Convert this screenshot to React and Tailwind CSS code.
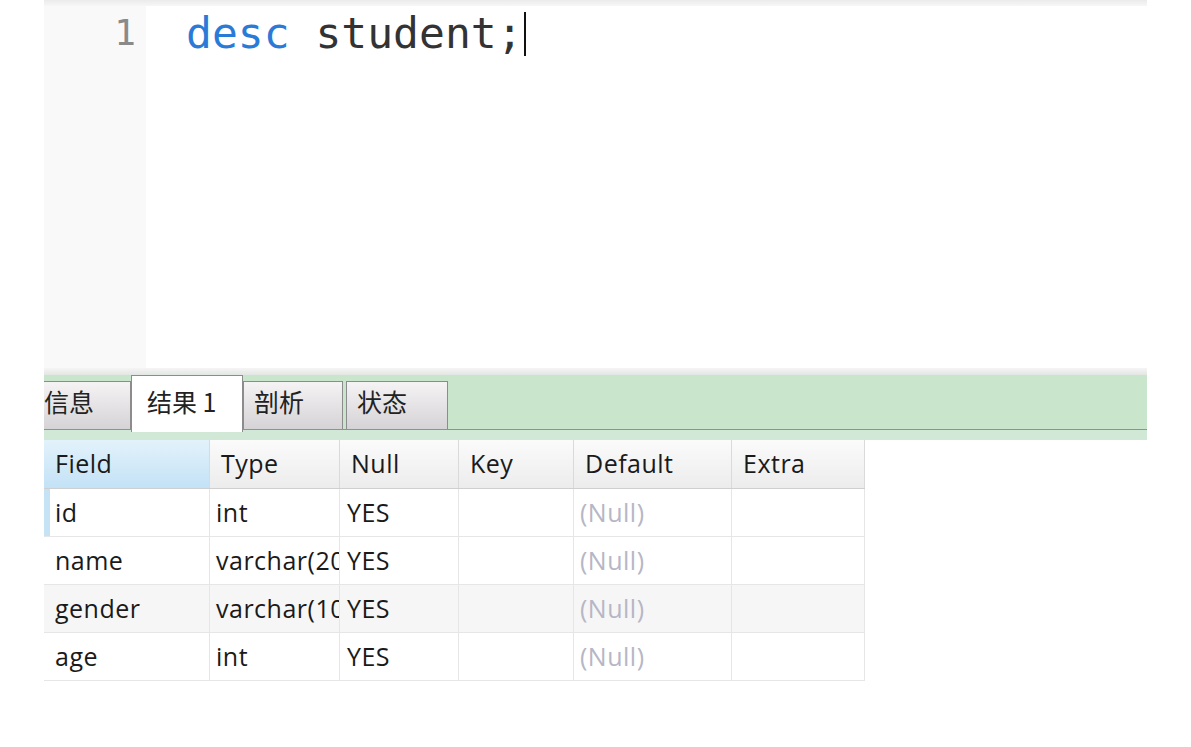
import React from 'react';

const columns = ['Field', 'Type', 'Null', 'Key', 'Default', 'Extra'];

const rows = [
  { field: 'id', type: 'int', nul: 'YES', key: '', def: '(Null)', extra: '' },
  { field: 'name', type: 'varchar(20)', nul: 'YES', key: '', def: '(Null)', extra: '' },
  { field: 'gender', type: 'varchar(10)', nul: 'YES', key: '', def: '(Null)', extra: '' },
  { field: 'age', type: 'int', nul: 'YES', key: '', def: '(Null)', extra: '' },
];

const gridCols = 'grid grid-cols-[166px_130px_119px_115px_158px_133px]';

function Tab({ label, active, first, width }) {
  if (active) {
    return (
      <div
        className={`relative z-10 -mb-[3px] h-[57px] ${width} shrink-0 border border-b-0 border-[#8c8c8c] bg-white pl-[15px] pt-[12px] text-[25px] leading-[26px] text-[#222]`}
      >
        {label}
      </div>
    );
  }
  return (
    <div
      className={`h-[48px] ${width} shrink-0 border-t border-r border-[#8c8c8c] ${
        first ? 'pl-0' : 'border-l pl-[10px]'
      } bg-gradient-to-b from-[#f5f3f4] to-[#d5d3d5] pt-[6px] text-[25px] leading-[26px] text-[#222]`}
    >
      {label}
    </div>
  );
}

export default function App() {
  return (
    <div className="h-[747px] w-full overflow-hidden bg-white" style={{ fontFamily: '"Open Sans", "Noto Sans CJK SC", sans-serif' }}>
      <div className="ml-[44px] w-[1103px]">
        {/* editor top strip */}
        <div className="h-[6px] bg-gradient-to-b from-[#ebebeb] to-[#f7f7f7]" />

        {/* editor */}
        <div className="flex h-[362px]">
          <div className="w-[102px] shrink-0 bg-[#f9f9f9] pr-[10px] text-right font-['DejaVu_Sans_Mono',monospace] text-[36px] leading-[54px] text-[#8a8a8a]">
            1
          </div>
          <div className="flex-1 bg-white pl-[40px] font-['DejaVu_Sans_Mono',monospace] text-[43px] leading-[54px] whitespace-pre">
            <span className="text-[#2a7bd8]">desc</span>
            <span className="text-[#333]"> student;</span>
            <span className="ml-[1px] inline-block h-[44px] w-[2px] bg-[#111] align-[-8px]" />
          </div>
        </div>

        {/* divider strip */}
        <div className="h-[7px] bg-gradient-to-b from-[#f5f5f5] to-[#e2e6e2]" />

        {/* tab bar */}
        <div className="flex h-[55px] items-end border-b border-[#7f9c84] bg-[#c9e6cc]" style={{ fontFamily: '"Noto Sans CJK SC", sans-serif' }}>
          <Tab label="信息" first width="w-[87px]" />
          <Tab label="结果 1" active width="w-[112px]" />
          <Tab label="剖析" width="w-[100px]" />
          <div className="w-[3px] shrink-0" />
          <Tab label="状态" width="w-[102px]" />
        </div>
        <div className="h-[10px] bg-[#d2e8d6]" />

        {/* result grid */}
        <div className="w-[821px] text-[25px] tracking-[0.5px] text-[#1a1a1a]">
          <div className={`${gridCols} h-[49px] border-b border-[#cfcfcf] bg-gradient-to-b from-[#fbfbfb] to-[#ececec]`}>
            {columns.map((c, i) => (
              <div
                key={c}
                className={`flex items-center border-r border-[#dadada] pl-[11px] ${
                  i === 0 ? 'bg-gradient-to-b from-[#e3f2fb] to-[#c3e2f6]' : ''
                }`}
              >
                {c}
              </div>
            ))}
          </div>
          {rows.map((r, idx) => (
            <div
              key={r.field}
              className={`${gridCols} h-[48px] border-b border-[#e6e6e6] ${idx === 2 ? 'bg-[#f6f6f6]' : 'bg-white'}`}
            >
              <div className="relative flex items-center overflow-hidden border-r border-[#e6e6e6] pl-[11px]">
                {idx === 0 && <span className="absolute inset-y-0 left-0 w-[6px] bg-[#c6e3f6]" />}
                {r.field}
              </div>
              <div className="flex items-center overflow-hidden whitespace-nowrap border-r border-[#e6e6e6] pl-[6px]">
                {r.type}
              </div>
              <div className="flex items-center border-r border-[#e6e6e6] pl-[7px]">{r.nul}</div>
              <div className="flex items-center border-r border-[#e6e6e6] pl-[11px]">{r.key}</div>
              <div className="flex items-center border-r border-[#e6e6e6] pl-[6px] text-[#b6b6c6]">{r.def}</div>
              <div className="flex items-center border-r border-[#e6e6e6] pl-[6px]">{r.extra}</div>
            </div>
          ))}
        </div>
      </div>
    </div>
  );
}
